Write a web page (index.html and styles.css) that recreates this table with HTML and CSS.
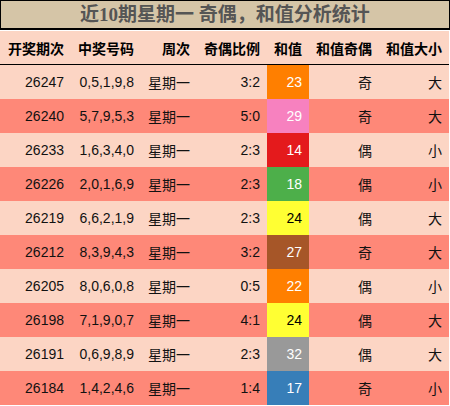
FILE: index.html
```html
<!DOCTYPE html>
<html lang="zh">
<head>
  <meta charset="UTF-8">
  <title>近10期星期一 奇偶，和值分析统计</title>
  <link rel="stylesheet" href="styles.css">
</head>
<body>

  <div class="titulo">近10期星期一 奇偶，和值分析统计</div>

  <div class="tabla">
    <div class="fila cabecera">
      <div>开奖期次</div><div>中奖号码</div><div>周次</div><div>奇偶比例</div><div>和值</div><div>和值奇偶</div><div>和值大小</div>
    </div>
    <div class="fila claro">
      <div>26247</div><div>0,5,1,9,8</div><div>星期一</div><div>3:2</div><div class="suma naranja">23</div><div>奇</div><div>大</div>
    </div>
    <div class="fila oscuro">
      <div>26240</div><div>5,7,9,5,3</div><div>星期一</div><div>5:0</div><div class="suma rosa">29</div><div>奇</div><div>大</div>
    </div>
    <div class="fila claro">
      <div>26233</div><div>1,6,3,4,0</div><div>星期一</div><div>2:3</div><div class="suma rojo">14</div><div>偶</div><div>小</div>
    </div>
    <div class="fila oscuro">
      <div>26226</div><div>2,0,1,6,9</div><div>星期一</div><div>2:3</div><div class="suma verde">18</div><div>偶</div><div>小</div>
    </div>
    <div class="fila claro">
      <div>26219</div><div>6,6,2,1,9</div><div>星期一</div><div>2:3</div><div class="suma amarillo">24</div><div>偶</div><div>大</div>
    </div>
    <div class="fila oscuro">
      <div>26212</div><div>8,3,9,4,3</div><div>星期一</div><div>3:2</div><div class="suma marron">27</div><div>奇</div><div>大</div>
    </div>
    <div class="fila claro">
      <div>26205</div><div>8,0,6,0,8</div><div>星期一</div><div>0:5</div><div class="suma naranja">22</div><div>偶</div><div>小</div>
    </div>
    <div class="fila oscuro">
      <div>26198</div><div>7,1,9,0,7</div><div>星期一</div><div>4:1</div><div class="suma amarillo">24</div><div>偶</div><div>大</div>
    </div>
    <div class="fila claro">
      <div>26191</div><div>0,6,9,8,9</div><div>星期一</div><div>2:3</div><div class="suma gris">32</div><div>偶</div><div>大</div>
    </div>
    <div class="fila oscuro">
      <div>26184</div><div>1,4,2,4,6</div><div>星期一</div><div>1:4</div><div class="suma azul">17</div><div>奇</div><div>小</div>
    </div>
  </div>

</body>
</html>
```

FILE: styles.css
```css
body {
  margin: 0;
  background-color: #fff;
  font-family: "Liberation Sans", "Noto Sans CJK SC", sans-serif;
  color: #111;
}
.titulo {
  width: 448px;
  height: 27px;
  border: 1px solid #000;
  border-bottom-width: 2px;
  margin-bottom: 1px;
  background-color: #d5c5a7;
  color: #555;
  font-family: "Liberation Serif", "Noto Sans CJK SC", serif;
  font-weight: bold;
  font-size: 19px;
  line-height: 27px;
  text-align: center;
}
.tabla {
  width: 449px;
}
.fila {
  display: grid;
  grid-template-columns: 71px 70px 56px 70px 42px 70px 70px;
  height: 34px;
  font-size: 14px;
}
.fila > div {
  display: flex;
  align-items: center;
  justify-content: flex-end;
  padding-right: 7px;
}
.cabecera {
  height: 33px;
  border-bottom: 1px solid #000;
  background-color: #fcd5c4;
  font-weight: bold;
  color: #000;
}
.claro {
  background-color: #fcd5c4;
}
.oscuro {
  background-color: #fe8878;
}
.suma {
  color: #fff;
}
.naranja { background-color: #ff7f00; }
.rosa { background-color: #f781bf; }
.rojo { background-color: #e41a1c; }
.verde { background-color: #4daf4a; }
.amarillo { background-color: #ffff33; color: #000; }
.marron { background-color: #a65628; }
.gris { background-color: #999999; }
.azul { background-color: #377eb8; }
```
